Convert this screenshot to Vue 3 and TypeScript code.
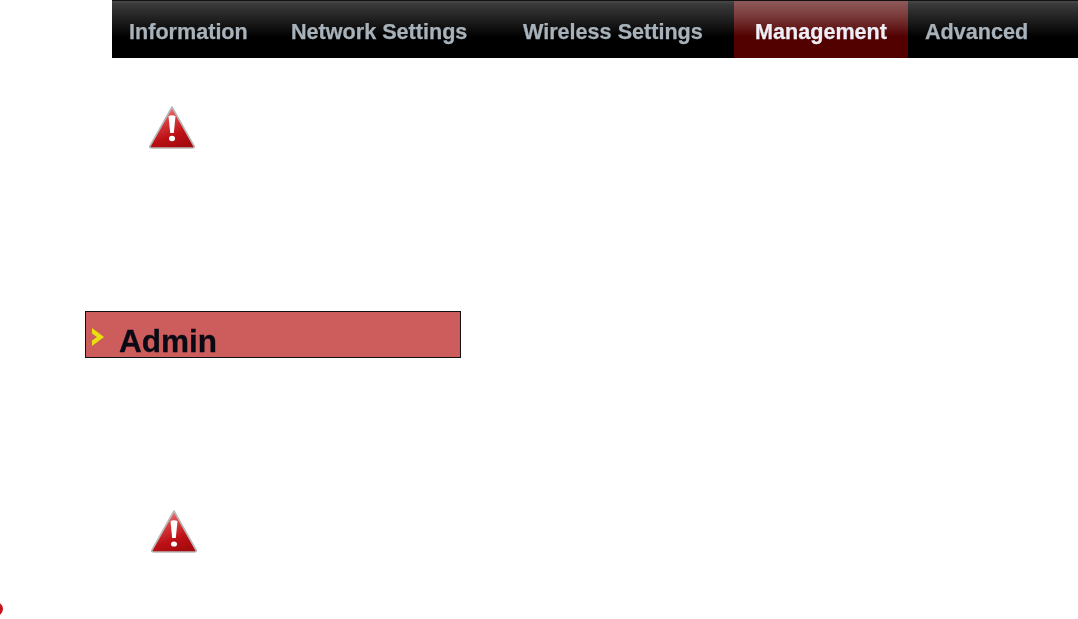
<script setup lang="ts">
const tabs = [
  { label: 'Information', width: 162, pad: 17 },
  { label: 'Network Settings', width: 232, pad: 17 },
  { label: 'Wireless Settings', width: 228, pad: 17 },
  { label: 'Management', width: 174, pad: 21, active: true },
  { label: 'Advanced', width: 170, pad: 17 },
]
</script>

<template>
  <div class="page">
    <nav class="nav">
      <div
        v-for="tab in tabs"
        :key="tab.label"
        class="tab"
        :class="{ active: tab.active }"
        :style="{ width: tab.width + 'px', paddingLeft: tab.pad + 'px' }"
      >
        <span class="tab-label">{{ tab.label }}</span>
      </div>
    </nav>

    <svg class="warn warn-top" viewBox="0 0 48 44" width="48" height="44">
      <defs>
        <linearGradient id="warnFill" x1="0.25" y1="0" x2="0.65" y2="1">
          <stop offset="0" stop-color="#ee8a8c" />
          <stop offset="0.35" stop-color="#d83a3e" />
          <stop offset="0.7" stop-color="#bb1015" />
          <stop offset="1" stop-color="#a40a0e" />
        </linearGradient>
      </defs>
      <path d="M24 2 L46 41 Q47 43 44 43 L4 43 Q1 43 2 41 Z" fill="url(#warnFill)" stroke="#b8b8b8" stroke-width="1.6" stroke-linejoin="round" />
      <path d="M20.5 11 Q24 9.5 27.5 11 L25.8 28 L22.2 28 Z" fill="#fff" />
      <ellipse cx="24" cy="33.5" rx="3" ry="2.7" fill="#fff" />
    </svg>

    <div class="heading">
      <svg class="chevron" viewBox="0 0 14 18" width="14" height="18">
        <path d="M1 0 L13 9 L1 18 L1 12.5 L6 9 L1 5.5 Z" fill="#e6e010" />
      </svg>
      <span class="heading-text">Admin</span>
    </div>

    <svg class="warn warn-bottom" viewBox="0 0 48 44" width="48" height="44">
      <path d="M24 2 L46 41 Q47 43 44 43 L4 43 Q1 43 2 41 Z" fill="url(#warnFill)" stroke="#b8b8b8" stroke-width="1.6" stroke-linejoin="round" />
      <path d="M20.5 12 Q24 10.5 27.5 12 L25.8 29 L22.2 29 Z" fill="#fff" />
      <ellipse cx="24" cy="35" rx="3" ry="2.6" fill="#fff" />
    </svg>

    <div class="dot"></div>
  </div>
</template>

<style>
html,
body {
  margin: 0;
  background: #fff;
}
</style>

<style scoped>
.page {
  width: 1078px;
  height: 619px;
  overflow: hidden;
  background: #fff;
}

.nav {
  display: flex;
  height: 58px;
  margin-left: 112px;
  background: linear-gradient(#4a4a4a 0, #3a3a3a 3px, #000 36px);
  border-top: 1px solid #111;
  box-sizing: border-box;
}

.tab {
  box-sizing: border-box;
  line-height: 61px;
  font-family: "Liberation Sans", Arial, sans-serif;
  font-size: 21.6px;
  font-weight: bold;
  color: #a8b2ba;
  white-space: nowrap;
}

.tab-label {
  display: inline-block;
  filter: blur(0.45px);
  -webkit-text-stroke: 0.25px currentColor;
}

.tab.active {
  color: #eeeef6;
  background: linear-gradient(#8f5a5a 0, #7a3a3a 15px, #520000 36px);
}

.warn {
  display: block;
  filter: blur(0.5px);
}

.warn-top {
  margin: 47px 0 0 148px;
}

.heading {
  box-sizing: border-box;
  display: flex;
  align-items: flex-start;
  width: 376px;
  height: 47px;
  margin: 162px 0 0 85px;
  background: #cd5c5c;
  border: 1px solid #111;
}

.chevron {
  margin: 16px 0 0 5px;
  filter: blur(0.4px);
}

.heading-text {
  margin: 11px 0 0 14px;
  font-family: "Liberation Sans", Arial, sans-serif;
  font-size: 31.5px;
  font-weight: bold;
  line-height: 36px;
  color: #0a0a14;
  filter: blur(0.6px);
  -webkit-text-stroke: 0.3px #0a0a14;
}

.warn-bottom {
  margin: 151px 0 0 150px;
}

.dot {
  width: 20px;
  height: 16px;
  margin: 48px 0 0 -17px;
  border-radius: 50%;
  background: #c8101a;
}
</style>
